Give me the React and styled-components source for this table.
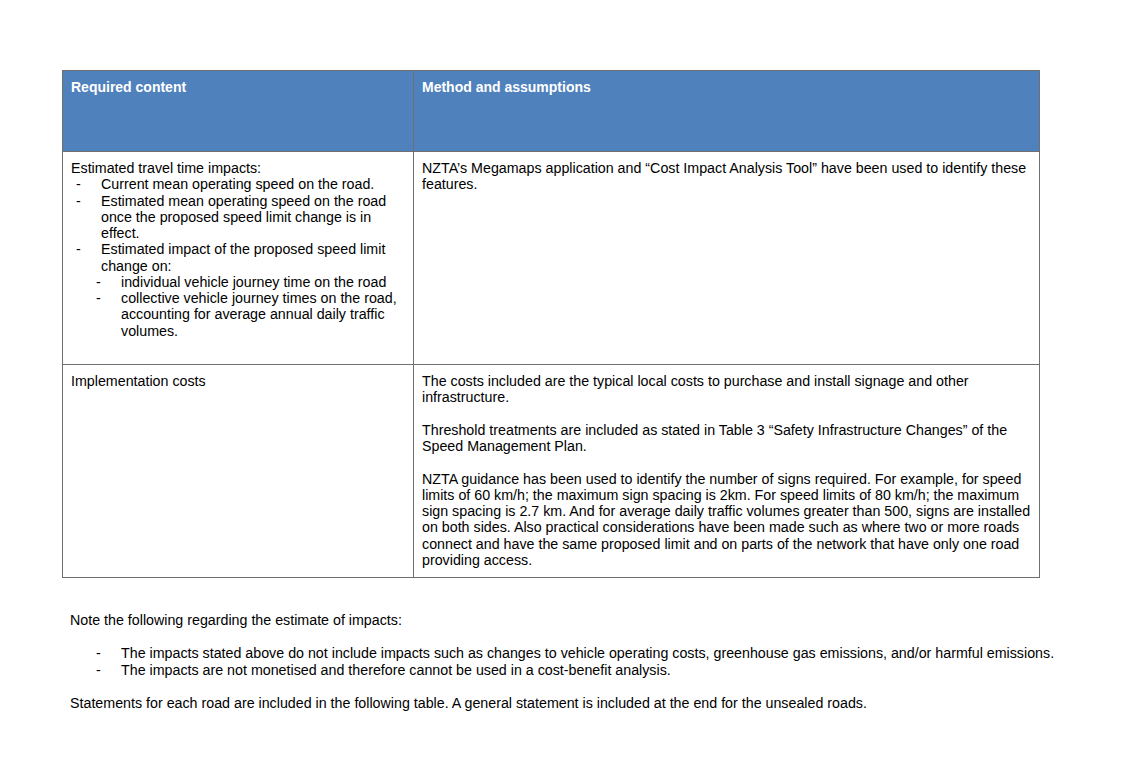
import React from "react";
import styled, { createGlobalStyle } from "styled-components";

const GlobalStyle = createGlobalStyle`
  html, body {
    margin: 0;
    padding: 0;
    background: #ffffff;
  }
  body {
    font-family: "Liberation Sans", Arial, sans-serif;
    font-size: 14.25px;
    line-height: 16.27px;
    color: #000;
  }
`;

// the page itself, like a printed document
const Page = styled.div`
  width: 1134px;
  min-height: 783px;
  padding: 70px 0 0 62px;
  box-sizing: border-box;
`;

const Table = styled.table`
  width: 977px;
  border-collapse: collapse;
  table-layout: fixed;
`;

const HeadCell = styled.th`
  background: #4f81bd;
  color: #ffffff;
  font-weight: bold;
  font-size: 14px;
  text-align: left;
  vertical-align: top;
  height: 81px;
  padding: 8px 8px;
  box-sizing: border-box;
  border: 1px solid #6f6f6f;
  width: ${(p) => p.w}px;
`;

const Cell = styled.td`
  vertical-align: top;
  padding: 8px 5px 8px 8px;
  height: ${(p) => p.h || 213}px;
  box-sizing: border-box;
  border: 1px solid #6f6f6f;
`;

const Para = styled.p`
  margin: 0 0 ${(p) => (p.last ? 0 : 16.27)}px 0;
`;

const DashList = styled.ul`
  list-style: none;
  margin: 0;
  padding: 0;
`;

const DashItem = styled.li`
  position: relative;
  padding-left: ${(p) => p.indent}px;
  &::before {
    content: "-";
    position: absolute;
    left: ${(p) => p.dash}px;
    top: 0;
  }
`;

const After = styled.div`
  padding: 34px 0 0 8px;
`;

const NoteList = styled.ul`
  list-style: none;
  margin: 17px 0 17px 0;
  padding: 0;
`;

const Estimated = () => (
  <>
    <div>Estimated travel time impacts:</div>
    <DashList>
      <DashItem indent={30} dash={5}>Current mean operating speed on the road.</DashItem>
      <DashItem indent={30} dash={5}>
        Estimated mean operating speed on the road once the proposed speed limit change is in effect.
      </DashItem>
      <DashItem indent={30} dash={5}>
        Estimated impact of the proposed speed limit change on:
        <DashList>
          <DashItem indent={20} dash={-5}>individual vehicle journey time on the road</DashItem>
          <DashItem indent={20} dash={-5}>
            collective vehicle journey times on the road, accounting for average annual daily traffic volumes.
          </DashItem>
        </DashList>
      </DashItem>
    </DashList>
  </>
);

export default function App() {
  return (
    <>
      <GlobalStyle />
      <Page>
        <Table>
          <thead>
            <tr>
              <HeadCell w={351}>Required content</HeadCell>
              <HeadCell w={626}>Method and assumptions</HeadCell>
            </tr>
          </thead>
          <tbody>
            <tr>
              <Cell>
                <Estimated />
              </Cell>
              <Cell>
                NZTA’s Megamaps application and “Cost Impact Analysis Tool” have been used to identify these features.
              </Cell>
            </tr>
            <tr>
              <Cell>Implementation costs</Cell>
              <Cell>
                <Para>
                  The costs included are the typical local costs to purchase and install signage and other
                  infrastructure.
                </Para>
                <Para>
                  Threshold treatments are included as stated in Table 3 “Safety Infrastructure Changes” of the
                  Speed Management Plan.
                </Para>
                <Para last>
                  NZTA guidance has been used to identify the number of signs required. For example, for speed
                  limits of 60 km/h; the maximum sign spacing is 2km. For speed limits of 80 km/h; the maximum
                  sign spacing is 2.7 km. And for average daily traffic volumes greater than 500, signs are installed
                  on both sides. Also practical considerations have been made such as where two or more roads
                  connect and have the same proposed limit and on parts of the network that have only one road
                  providing access.
                </Para>
              </Cell>
            </tr>
          </tbody>
        </Table>
        <After>
          <div>Note the following regarding the estimate of impacts:</div>
          <NoteList>
            <DashItem indent={51} dash={26}>
              The impacts stated above do not include impacts such as changes to vehicle operating costs, greenhouse gas emissions, and/or harmful emissions.
            </DashItem>
            <DashItem indent={51} dash={26}>
              The impacts are not monetised and therefore cannot be used in a cost-benefit analysis.
            </DashItem>
          </NoteList>
          <div>
            Statements for each road are included in the following table. A general statement is included at the end for the unsealed roads.
          </div>
        </After>
      </Page>
    </>
  );
}
